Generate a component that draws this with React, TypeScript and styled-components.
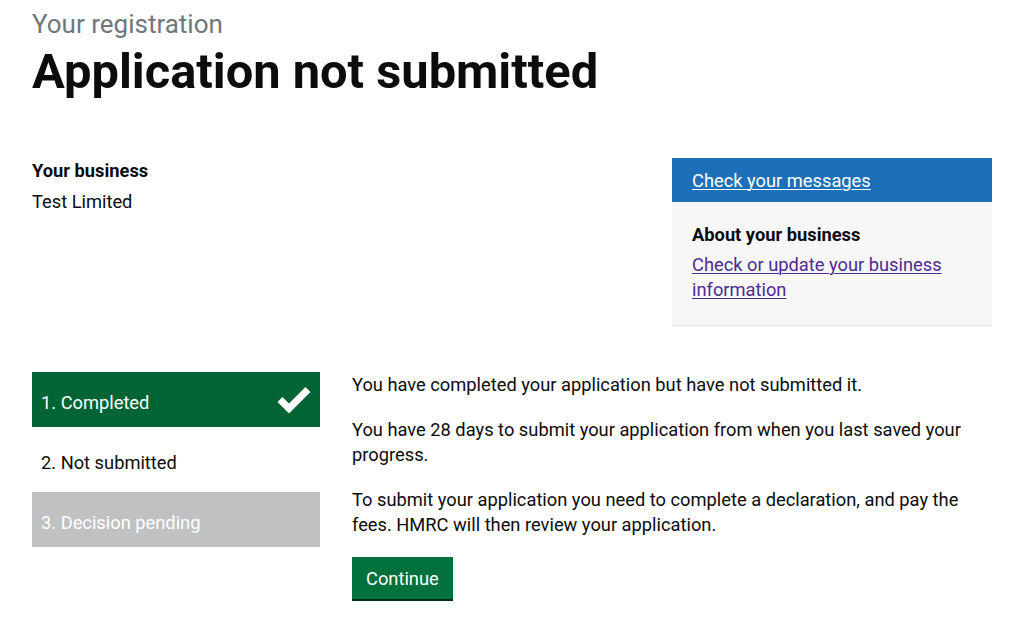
import React from "react";
import styled, { createGlobalStyle } from "styled-components";

const GlobalStyle = createGlobalStyle`
  html, body { margin: 0; padding: 0; background: #ffffff; }
  body {
    font-family: "Roboto", "Liberation Sans", sans-serif;
    font-size: 18.3px;
    line-height: 25px;
    color: #0b0c0c;
  }
  * { box-sizing: border-box; }
`;

const Page = styled.main`
  width: 960px;
  margin: 0 0 0 32px;
  padding: 9px 0 40px;
`;

const Caption = styled.span`
  display: block;
  font-size: 26px;
  line-height: 30px;
  color: #6f777b;
  margin-bottom: 8px;
`;

const Heading = styled.h1`
  margin: 0 0 61px;
  font-weight: 700;
  font-size: 48.8px;
  line-height: 50px;
  color: #0b0c0c;
`;

const TopRow = styled.div`
  display: grid;
  grid-template-columns: 640px 320px;
  align-items: start;
`;

const Label = styled.h2<{ $gap?: number }>`
  margin: 0 0 ${(p) => p.$gap ?? 5}px;
  font-size: 18.3px;
  line-height: 25px;
  font-weight: 700;
`;

const Value = styled.p`
  margin: 0;
`;

const Sidebar = styled.aside`
  display: flex;
  flex-direction: column;
`;

const SidebarBar = styled.div`
  height: 44px;
  padding: 0 20px;
  display: flex;
  align-items: center;
  background: #1d70b8;
`;

const Link = styled.a<{ $tone?: "light" | "visited" }>`
  color: ${(p) => (p.$tone === "light" ? "#ffffff" : "#4c2c92")};
  text-decoration: underline;
  text-decoration-thickness: 1px;
  text-underline-offset: 2px;
  cursor: pointer;
`;

const SidebarPanel = styled.div`
  background: #f7f7f7;
  padding: 20px 20px 22px;
  border-bottom: 3px solid #efefef;
`;

const BottomRow = styled.div`
  margin-top: 45px;
  display: grid;
  grid-template-columns: 288px 640px;
  column-gap: 32px;
  align-items: start;
`;

const Steps = styled.ol`
  list-style: none;
  margin: 0;
  padding: 0;
`;

type StepState = "done" | "current" | "todo";

const Step = styled.li<{ $state: StepState }>`
  height: 55px;
  padding: 0 9px;
  display: flex;
  align-items: center;
  justify-content: space-between;
  margin: ${(p) => (p.$state === "current" ? "5px 0" : "0")};
  background: ${(p) =>
    p.$state === "done" ? "#006435" : p.$state === "todo" ? "#bfc1c3" : "transparent"};
  color: ${(p) => (p.$state === "current" ? "#0b0c0c" : "#ffffff")};
`;

const StepLabel = styled.span`
  display: block;
  padding-top: 5px;
`;

const Content = styled.div`
  display: flex;
  flex-direction: column;
  align-items: flex-start;
`;

const Para = styled.p`
  margin: 0 0 20px;
`;

const Button = styled.button`
  height: 42px;
  padding: 0 14px;
  border: 0;
  border-radius: 0;
  background: #00703c;
  box-shadow: 0 2px 0 #002d18;
  color: #ffffff;
  font-family: inherit;
  font-size: 18.3px;
  line-height: 25px;
  cursor: pointer;
`;

const Tick = () => (
  <svg width="34" height="27" viewBox="0 0 34 27" aria-hidden="true">
    <polyline
      points="3,13.5 12,22.5 31,3.5"
      fill="none"
      stroke="#ffffff"
      strokeWidth="7"
      strokeLinejoin="miter"
    />
  </svg>
);

const steps: { label: string; state: StepState }[] = [
  { label: "1. Completed", state: "done" },
  { label: "2. Not submitted", state: "current" },
  { label: "3. Decision pending", state: "todo" },
];

export default function App() {
  return (
    <>
      <GlobalStyle />
      <Page>
        <Caption>Your registration</Caption>
        <Heading>Application not submitted</Heading>

        <TopRow>
          <div>
            <Label $gap={6}>Your business</Label>
            <Value>Test Limited</Value>
          </div>
          <Sidebar>
            <SidebarBar>
              <Link $tone="light">Check your messages</Link>
            </SidebarBar>
            <SidebarPanel>
              <Label>About your business</Label>
              <Link $tone="visited">Check or update your business information</Link>
            </SidebarPanel>
          </Sidebar>
        </TopRow>

        <BottomRow>
          <Steps>
            {steps.map((s) => (
              <Step key={s.label} $state={s.state}>
                <StepLabel>{s.label}</StepLabel>
                {s.state === "done" && <Tick />}
              </Step>
            ))}
          </Steps>
          <Content>
            <Para>You have completed your application but have not submitted it.</Para>
            <Para>You have 28 days to submit your application from when you last saved your progress.</Para>
            <Para>
              To submit your application you need to complete a declaration, and pay the fees. HMRC will
              then review your application.
            </Para>
            <Button>Continue</Button>
          </Content>
        </BottomRow>
      </Page>
    </>
  );
}
